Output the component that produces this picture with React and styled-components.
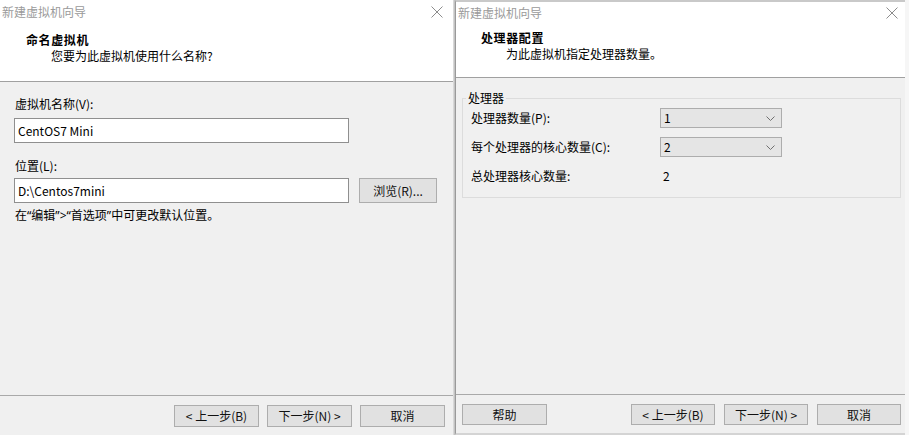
import React from "react";
import styled, { createGlobalStyle } from "styled-components";

const GlobalStyle = createGlobalStyle`
  html, body {
    margin: 0;
    padding: 0;
    background: #f6f6f6;
  }
  body {
    font-family: "Noto Sans CJK SC", "Noto Sans", sans-serif;
    font-size: 12px;
    color: #000;
  }
`;

const Desktop = styled.div`
  display: flex;
  width: 909px;
  height: 435px;
  overflow: hidden;
  background: #f6f6f6;
`;

const Dialog = styled.section`
  display: flex;
  flex-direction: column;
  width: ${(p) => p.$width}px;
  height: 435px;
  box-sizing: border-box;
  background: #f0f0f0;
  border-top: ${(p) => (p.$framed ? "2px solid #c9c9c9" : "none")};
  border-bottom: ${(p) => (p.$framed ? "2px solid #d4d4d4" : "none")};
  border-left: ${(p) => (p.$framed ? "1px solid #9a9a9a" : "none")};
`;

const Shadow = styled.div`
  width: 2px;
  height: 435px;
  background: linear-gradient(to right, #e2e2e2, #b9b9b9);
`;

const Top = styled.div`
  background: #fff;
  border-bottom: 1px solid #a0a0a0;
`;

const TitleBar = styled.div`
  display: flex;
  align-items: center;
  justify-content: space-between;
  height: ${(p) => p.$height}px;
  padding: 0 ${(p) => p.$closeRight}px 0 2px;
  color: #9a9a9a;
  font-size: 12px;
  line-height: 16px;
`;

const CloseIcon = () => (
  <svg width="12" height="12" viewBox="0 0 12 12">
    <path d="M0.5 0.5 L11.5 11.5 M11.5 0.5 L0.5 11.5" stroke="#8c8c8c" strokeWidth="1" fill="none" />
  </svg>
);

const Header = styled.div`
  padding: ${(p) => p.$top}px 0 ${(p) => p.$bottom}px ${(p) => p.$left}px;
`;

const Heading = styled.div`
  font-weight: 700;
  font-size: 12px;
  line-height: 16px;
  letter-spacing: 0.6px;
`;

const Subtitle = styled.div`
  line-height: 16px;
  padding-left: 25px;
`;

const Body = styled.div`
  flex: 1;
  padding: ${(p) => p.$pad};
  display: flex;
  flex-direction: column;
`;

const Label = styled.div`
  line-height: 16px;
  margin-top: ${(p) => p.$mt || 0}px;
  padding-left: ${(p) => p.$pl || 0}px;
`;

const Quote = styled.span`
  font-family: "Noto Sans", sans-serif;
`;

const FieldRow = styled.div`
  display: flex;
  align-items: center;
  gap: 10px;
  margin-top: ${(p) => p.$mt || 0}px;
`;

const TextBox = styled.div`
  width: 335px;
  height: 25px;
  box-sizing: border-box;
  border: 1px solid #8f8f8f;
  background: #fff;
  padding: 0 3px;
  display: flex;
  align-items: center;
  line-height: 16px;
`;

const Button = styled.div`
  width: ${(p) => p.$w || 85}px;
  height: ${(p) => p.$h || 22}px;
  box-sizing: border-box;
  border: 1px solid #adadad;
  background: #e1e1e1;
  display: flex;
  align-items: center;
  justify-content: center;
  line-height: 16px;
  color: #111;
`;

const Footer = styled.div`
  border-top: 1px solid #a9a9a9;
  display: flex;
  align-items: center;
  justify-content: space-between;
  padding: ${(p) => p.$pad};
`;

const ButtonGroup = styled.div`
  display: flex;
  gap: ${(p) => p.$gap}px;
  margin-left: auto;
`;

const GroupBox = styled.fieldset`
  margin: 12px 0 0 0;
  padding: 2px 0 11px 8px;
  border: 1px solid #dcdcdc;
  min-inline-size: 0;
`;

const Legend = styled.legend`
  padding: 0 2px;
  margin-left: -5px;
  line-height: 16px;
`;

const ProcGrid = styled.div`
  display: grid;
  grid-template-columns: 189px 122px;
  grid-auto-rows: 20px;
  row-gap: 9px;
  align-items: center;
`;

const Select = styled.div`
  height: 20px;
  box-sizing: border-box;
  border: 1px solid #adadad;
  background: #e5e5e5;
  display: flex;
  align-items: center;
  justify-content: space-between;
  padding: 0 6px 0 3px;
  line-height: 16px;
  color: #000;
`;

const Chevron = () => (
  <svg width="9" height="5" viewBox="0 0 9 5">
    <path d="M0.5 0.5 L4.5 4.5 L8.5 0.5" stroke="#707070" strokeWidth="1" fill="none" />
  </svg>
);

const Value = styled.div`
  line-height: 16px;
  padding-left: 3px;
`;

export default function App() {
  return (
    <>
      <GlobalStyle />
      <Desktop>
        <Dialog $width={453}>
          <Top>
            <TitleBar $height={24} $closeRight={10}>
              <span>新建虚拟机向导</span>
              <CloseIcon />
            </TitleBar>
            <Header $top={8} $bottom={17} $left={26}>
              <Heading>命名虚拟机</Heading>
              <Subtitle>您要为此虚拟机使用什么名称?</Subtitle>
            </Header>
          </Top>
          <Body $pad="14px 0 0 14px">
            <Label $pl={1}>虚拟机名称(V):</Label>
            <FieldRow $mt={6}>
              <TextBox>CentOS7 Mini</TextBox>
            </FieldRow>
            <Label $mt={15} $pl={1}>位置(L):</Label>
            <FieldRow $mt={4}>
              <TextBox>D:\Centos7mini</TextBox>
              <Button $w={78} $h={25}>浏览(R)...</Button>
            </FieldRow>
            <Label $mt={4} $pl={1}>
              在<Quote>“</Quote>编辑<Quote>”&gt;“</Quote>首选项<Quote>”</Quote>中可更改默认位置。
            </Label>
          </Body>
          <Footer $pad="9px 8px 8px 0">
            <ButtonGroup $gap={8}>
              <Button>&lt; 上一步(B)</Button>
              <Button>下一步(N) &gt;</Button>
              <Button>取消</Button>
            </ButtonGroup>
          </Footer>
        </Dialog>
        <Shadow />
        <Dialog $width={450} $framed>
          <Top>
            <TitleBar $height={22} $closeRight={7}>
              <span>新建虚拟机向导</span>
              <CloseIcon />
            </TitleBar>
            <Header $top={6} $bottom={15} $left={25}>
              <Heading>处理器配置</Heading>
              <Subtitle>为此虚拟机指定处理器数量。</Subtitle>
            </Header>
          </Top>
          <Body $pad="0 4px 0 6px">
            <GroupBox>
              <Legend>处理器</Legend>
              <ProcGrid>
                <Label>处理器数量(P):</Label>
                <Select>
                  <span>1</span>
                  <Chevron />
                </Select>
                <Label>每个处理器的核心数量(C):</Label>
                <Select>
                  <span>2</span>
                  <Chevron />
                </Select>
                <Label>总处理器核心数量:</Label>
                <Value>2</Value>
              </ProcGrid>
            </GroupBox>
          </Body>
          <Footer $pad="9px 4px 8px 6px">
            <Button $h={21}>帮助</Button>
            <ButtonGroup $gap={9}>
              <Button $w={84} $h={21}>&lt; 上一步(B)</Button>
              <Button $w={84} $h={21}>下一步(N) &gt;</Button>
              <Button $w={84} $h={21}>取消</Button>
            </ButtonGroup>
          </Footer>
        </Dialog>
      </Desktop>
    </>
  );
}
